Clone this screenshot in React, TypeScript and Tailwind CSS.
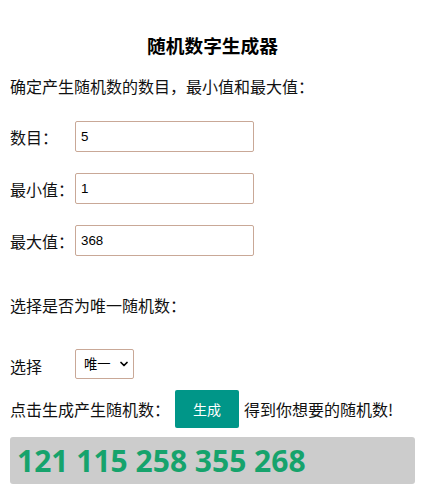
import { ChevronDown } from 'lucide-react';

const FIELDS = [
  { label: '数目：', value: '5' },
  { label: '最小值：', value: '1' },
  { label: '最大值：', value: '368' },
];

export default function App() {
  return (
    <div className="min-h-[497px] bg-white px-[10px] pt-[34px] text-[16px] leading-[22px] text-[#111] font-['Noto_Sans_CJK_SC','Microsoft_YaHei',sans-serif]">
      <h3 className="text-center text-[18.72px] leading-[22px] font-bold text-black">随机数字生成器</h3>
      <p className="mt-[19px]">确定产生随机数的数目，最小值和最大值：</p>

      <div className="mt-[24px] flex flex-col gap-[21px]">
        {FIELDS.map((f) => (
          <div key={f.label} className="flex items-center">
            <label className="w-[65px]">{f.label}</label>
            <input
              defaultValue={f.value}
              className="h-[31px] w-[179px] rounded-[2px] border border-[#c9a897] px-[5px] text-[13.33px] text-black font-['Liberation_Sans',sans-serif] outline-none"
            />
          </div>
        ))}
      </div>

      <p className="mt-[38px]">选择是否为唯一随机数：</p>

      <div className="mt-[33px] flex items-center">
        <span className="w-[65px] pt-[3px]">选择</span>
        <div className="relative h-[30px] w-[59px]">
          <select className="h-full w-full appearance-none rounded-[2px] border border-[#c9a897] bg-white pl-[8px] text-[13.33px] text-black outline-none">
            <option>唯一</option>
            <option>不唯一</option>
          </select>
          <ChevronDown className="pointer-events-none absolute right-[4px] top-[9px] h-[12px] w-[12px] text-black" strokeWidth={3.5} />
        </div>
      </div>

      <div className="mt-[11px] flex items-center">
        <span>点击生成产生随机数：</span>
        <button className="ml-[5px] h-[38px] w-[64px] rounded-[2px] bg-[#009688] text-[14px] text-white">生成</button>
        <span className="ml-[5px]">得到你想要的随机数!</span>
      </div>

      <div className="mt-[9px] flex h-[47px] items-center rounded-[3px] bg-[#cccccc] px-[7px]">
        <span className="text-[30px] font-bold leading-none text-[#16a36c] font-['Noto_Sans',sans-serif]">121 115 258 355 268</span>
      </div>
    </div>
  );
}
